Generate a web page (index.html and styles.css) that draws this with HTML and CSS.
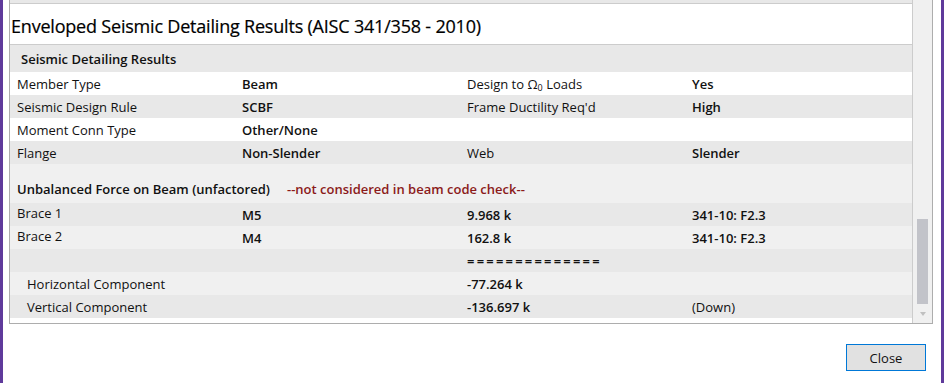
FILE: index.html
```html
<!DOCTYPE html>
<html lang="en">

<head>
    <meta charset="UTF-8">
    <title>Enveloped Seismic Detailing Results</title>
    <link rel="stylesheet" href="styles.css">
</head>

<body>
    <div class="window">
        <div class="panel">
            <div class="table">
                <div class="cut-row"></div>
                <div class="title">Enveloped Seismic Detailing Results (AISC 341/358 - 2010)</div>
                <div class="section">Seismic Detailing Results</div>

                <div class="row white">
                    <span>Member Type</span>
                    <span class="bold">Beam</span>
                    <span>Design to &Omega;<sub>0</sub> Loads</span>
                    <span class="bold">Yes</span>
                </div>
                <div class="row gray">
                    <span>Seismic Design Rule</span>
                    <span class="bold">SCBF</span>
                    <span>Frame Ductility Req'd</span>
                    <span class="bold">High</span>
                </div>
                <div class="row white">
                    <span>Moment Conn Type</span>
                    <span class="bold">Other/None</span>
                    <span></span>
                    <span></span>
                </div>
                <div class="row gray">
                    <span>Flange</span>
                    <span class="bold">Non-Slender</span>
                    <span>Web</span>
                    <span class="bold">Slender</span>
                </div>

                <!-- force summary -->
                <div class="row light tall">
                    <span class="bold">Unbalanced Force on Beam (unfactored)</span>
                    <span class="bold note">--not considered in beam code check--</span>
                </div>
                <div class="row gray">
                    <span class="up">Brace 1</span>
                    <span class="bold">M5</span>
                    <span class="bold">9.968 k</span>
                    <span class="bold">341-10: F2.3</span>
                </div>
                <div class="row light">
                    <span class="up">Brace 2</span>
                    <span class="bold">M4</span>
                    <span class="bold">162.8 k</span>
                    <span class="bold">341-10: F2.3</span>
                </div>
                <div class="row gray">
                    <span></span>
                    <span></span>
                    <span class="bold rule">==============</span>
                    <span></span>
                </div>
                <div class="row light">
                    <span class="indent">Horizontal Component</span>
                    <span></span>
                    <span class="bold">-77.264 k</span>
                    <span></span>
                </div>
                <div class="row gray">
                    <span class="indent">Vertical Component</span>
                    <span></span>
                    <span class="bold">-136.697 k</span>
                    <span>(Down)</span>
                </div>
            </div>

            <div class="scrollbar">
                <div class="thumb"></div>
                <div class="arrow"></div>
            </div>
        </div>

        <div class="footer">
            <button class="close-button">Close</button>
        </div>
    </div>
</body>

</html>
```

FILE: styles.css
```css
body {
    margin: 0;
    background-color: #ffffff;
    font-family: "Open Sans", "Noto Sans", sans-serif;
    font-size: 13px;
    color: #111;
}

.window {
    width: 924px;
    height: 383px;
    border-left: 3px solid #5f3a9b;
    border-right: 3px solid #5f3a9b;
    padding: 0 8px 0 6px;
    display: flex;
    flex-direction: column;
}

.panel {
    display: flex;
    height: 323px;
    border: 1px solid #adadad;
    border-top: none;
}

.table {
    width: 902px;
    border-right: 1px solid #cccccc;
    background-color: #ffffff;
}

.cut-row {
    height: 3px;
    background-color: #e8e8e8;
    border-bottom: 1px solid #cccccc;
}

.title {
    height: 41px;
    border-bottom: 1px solid #cccccc;
    padding-left: 1px;
    display: flex;
    align-items: center;
    padding-top: 3px;
    box-sizing: border-box;
    font-size: 18px;
    letter-spacing: -0.2px;
    color: #000;
    -webkit-text-stroke: 0.2px #000;
}

.section {
    height: 27px;
    background-color: #e8e8e8;
    padding-left: 11px;
    display: flex;
    align-items: center;
    font-weight: 600;
}

.row {
    display: grid;
    grid-template-columns: 225px 225px 225px auto;
    height: 23px;
    align-items: center;
}

.row span {
    padding-left: 7px;
    white-space: nowrap;
}

.row sub {
    font-size: 9px;
    line-height: 0;
    vertical-align: -2px;
}

.white {
    background-color: #ffffff;
}

.gray {
    background-color: #e8e8e8;
}

.light {
    background-color: #f0f0f0;
}

.tall {
    height: 39px;
    grid-template-columns: 277px auto;
    align-items: end;
    padding-bottom: 5px;
    box-sizing: border-box;
}

.tall .note {
    padding-left: 0;
}

.bold {
    font-weight: 600;
}

.note {
    color: #8b1a1a;
}

.rule {
    letter-spacing: 2.2px;
}

.indent {
    padding-left: 17px !important;
}

.up {
    margin-top: -4px;
}

.scrollbar {
    width: 19px;
    background-color: #f0f0f0;
    display: flex;
    flex-direction: column;
    align-items: center;
}

.thumb {
    width: 11px;
    height: 85px;
    margin-top: 219px;
    background-color: #c2c3c9;
}

.arrow {
    margin-top: 8px;
    width: 0;
    height: 0;
    border-left: 3px solid transparent;
    border-right: 3px solid transparent;
    border-top: 4px solid #c0c0c0;
}

.footer {
    display: flex;
    justify-content: flex-end;
    padding-top: 20px;
    padding-right: 7px;
}

.close-button {
    width: 80px;
    height: 27px;
    border: 1px solid #0078d7;
    background-color: #e1e1e1;
    font-family: "Open Sans", "Noto Sans", sans-serif;
    font-size: 13px;
    color: #111;
}
```
